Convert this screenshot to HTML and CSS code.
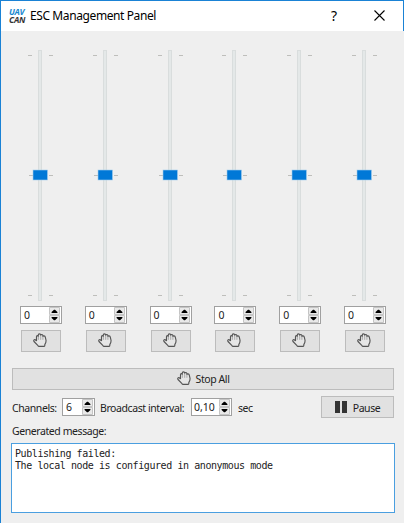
FILE: index.html
```html
<!DOCTYPE html>
<html lang="en">
<head>
<meta charset="utf-8">
<title>ESC Management Panel</title>
<link rel="stylesheet" href="styles.css">
</head>
<body>
<svg width="0" height="0" class="defs">
  <symbol id="hand" viewBox="0 0 14 14">
    <path d="M3.5 8V3.7C3.5 2.4 5.2 2.3 5.3 3.5C5.2 1.9 5.4 .8 6.4.8S7.7 1.5 7.7 2.3C7.9 1.2 9.8 1.2 9.9 2.7V3.5C10.2 2.5 12 2.6 12.2 3.8L13 7.1C13.3 9.4 12.5 10.5 11.8 11.6V12.6Q11.8 13.3 11.1 13.3H6Q5.3 13.3 5 12.7L1 8.5C.3 7.5 1.2 6.1 2.2 6.7L3.5 8" fill="#e6e6e6" stroke="#555" stroke-width="1.15" stroke-linejoin="round"/>
    <path d="M5.4 3.4V6.8M7.7 2.4V6.8M9.9 3.3V6.8" fill="none" stroke="#999" stroke-width=".8"/>
  </symbol>
  <symbol id="arrows" viewBox="0 0 11 16">
    <path d="M.5.5H10.5V7.5H.5ZM.5 8.5H10.5V15.5H.5Z" fill="#e9e9e9" stroke="#c4c4c4"/>
    <path d="M2.6 6V5L5 2.8H6L8.4 5V6ZM2.6 10V11L5 13.2H6L8.4 11V10Z" fill="#000"/>
  </symbol>
</svg>
<div class="window">
  <header class="titlebar">
    <div class="logo"><span class="uav">UAV</span><span>CAN</span></div>
    <h1>ESC Management Panel</h1>
    <span class="help">?</span>
    <svg class="close" width="11" height="11" viewBox="0 0 11 11"><path d="M.5.5L10.5 10.5M10.5.5L.5 10.5" stroke="#000" stroke-width="1.1"/></svg>
  </header>
  <main>
    <div class="channels" id="channels"></div>
    <button class="btn stop-all"><svg width="14" height="14"><use href="#hand"/></svg><span>Stop All</span></button>
    <div class="settings">
      <span class="label channels-label">Channels:</span>
      <div class="spin count"><span>6</span><svg width="11" height="16"><use href="#arrows"/></svg></div>
      <span class="label interval-label">Broadcast interval:</span>
      <div class="spin interval"><span>0,10</span><svg width="11" height="16"><use href="#arrows"/></svg></div>
      <span class="label sec">sec</span>
      <button class="btn pause"><svg width="12" height="12" viewBox="0 0 12 12"><path d="M0 0H5V12H0ZM7 0H12V12H7Z" fill="#333"/></svg><span class="pause-text">Pause</span></button>
    </div>
    <div class="label message-label"><span>Generated message:</span></div>
    <div class="message">Publishing failed:
The local node is configured in anonymous mode</div>
  </main>
</div>
<script src="app.js"></script>
</body>
</html>
```
FILE: styles.css
```css
* { box-sizing: border-box; }
body { margin: 0; font: 10.5px/14px "Noto Sans", sans-serif; letter-spacing: -.42px; color: #222; }
.defs { display: none; }
.window { width: 404px; height: 523px; background: #efefef; border-left: 1px solid #1a82d5; border-top: 1px solid #1a82d5; overflow: hidden; }
.titlebar { height: 30px; background: #fff; border-right: 1px solid #1a82d5; display: flex; align-items: center; color: #000; }
.logo { width: 17px; margin: 0 0 1px 8px; font: italic bold 8.5px/7.5px "Open Sans", sans-serif; letter-spacing: -.3px; color: #333; display: flex; flex-direction: column; }
.uav { color: #1688cf; }
h1 { margin: 0 0 0 4px; width: 150px; font: 12px/16px "Noto Sans", sans-serif; white-space: nowrap; letter-spacing: -.4px; }
.help { margin-left: 151px; width: 10px; font-size: 14px; line-height: 16px; }
.close { margin-left: 33px; margin-bottom: 2px; }
main { padding: 19px 9px 0 11px; }
.channels { display: flex; gap: 22.8px; margin-left: 8px; }
.channel { width: 42px; flex: none; display: flex; flex-direction: column; align-items: center; }
.slider { display: block; margin-bottom: 5px; }
.spin { height: 18px; border: 1px solid #a0a0a0; background: #fff; display: flex; justify-content: space-between; align-items: center; padding-left: 3px; flex: none; letter-spacing: 0; }
.spin svg { display: block; margin-right: 1px; }
.channel .spin { width: 42px; }
.btn { font: inherit; letter-spacing: inherit; color: #222; padding: 0; border: 1px solid #bcbcbc; background: #e1e1e1; height: 22px; display: flex; align-items: center; justify-content: center; border-radius: 0; }
.channel .btn { width: 40px; margin-top: 6px; }
.channel .btn svg { margin-right: 2px; margin-bottom: 2px; }
.stop-all { width: 382px; margin-top: 16px; gap: 5px; }
.stop-all svg { margin-bottom: 2px; }
.settings { display: flex; align-items: center; height: 22px; margin-top: 6px; }
.label { white-space: nowrap; flex: none; }
.settings .label { padding-top: 2px; }
.channels-label { width: 50px; }
.count { width: 33px; }
.interval-label { width: 91px; margin-left: 5px; }
.interval { width: 41px; padding-left: 2px; }
.sec { margin-left: 6px; width: 15px; }
.pause { width: 73px; margin-left: auto; margin-right: 1px; gap: 6px; }
.pause-text { padding-top: 2px; }
.message-label { margin-top: 6px; margin-bottom: 5px; }
.message { margin: 0 0 0 -1px; width: 384px; height: 70px; background: #fff; border: 1px solid #4a9fe0; padding: 4px 3px; font: 10px/12px "DejaVu Sans Mono", monospace; letter-spacing: -.42px; white-space: pre; }
```
FILE: app.js
```js
const strip = document.getElementById("channels");
for (let i = 0; i < 6; i++) {
  strip.insertAdjacentHTML("beforeend", `
    <div class="channel">
      <svg class="slider" width="30" height="251" viewBox="0 0 30 251">
        <rect x="12.5" y=".5" width="3" height="250" fill="#e4e8e8" stroke="#d9dddd"/>
        <path d="M2 5.5H6M23 5.5H27M2 245.5H6M23 245.5H27M3 125.5H7M23 125.5H27" stroke="#bebebb"/>
        <rect x="7" y="120" width="14.5" height="10" fill="#0078d7" stroke="#a3cceb" stroke-width=".6"/>
      </svg>
      <div class="spin"><span>0</span><svg width="11" height="16"><use href="#arrows"/></svg></div>
      <button class="btn" aria-label="Stop"><svg width="14" height="14"><use href="#hand"/></svg></button>
    </div>`);
}
```
